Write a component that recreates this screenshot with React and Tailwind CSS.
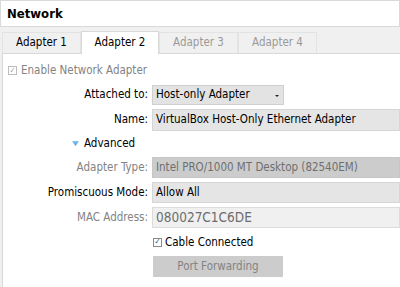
import React from "react";

function Tab({ label, selected, disabled }) {
  if (selected) {
    return (
      <div className="relative z-10 -mb-px flex h-[23px] w-[78px] items-center justify-center border border-b-0 border-[#d9d9d9] bg-white text-black">
        {label}
      </div>
    );
  }
  return (
    <div
      className={
        "flex h-[21px] w-[79px] items-center justify-center border border-b-0 border-[#e3e3e3] bg-[#f0f0f0] " +
        (disabled ? "text-[#9a9a9a]" : "text-black")
      }
    >
      {label}
    </div>
  );
}

function Row({ label, gray, children, className = "" }) {
  return (
    <div className={"flex h-[21px] items-center " + className}>
      <div
        className={
          "w-[146px] pr-[1px] pt-[1px] text-right " + (gray ? "text-[#838383]" : "text-black")
        }
      >
        {label}
      </div>
      <div className="ml-[3px] flex h-full flex-1 items-center">{children}</div>
    </div>
  );
}

export default function App() {
  return (
    <div
      className="h-[287px] w-[400px] overflow-hidden bg-[#f0f0f0] text-[11.5px] leading-none"
      style={{ fontFamily: '"DejaVu Sans Condensed", "Liberation Sans", Arial, sans-serif' }}
    >
      <div className="flex h-[27px] items-center border border-[#d9d9d9] bg-white pl-[6px] text-[13px] font-bold text-black">
        Network
      </div>
      <div className="flex h-[26px] items-end pl-[2px]">
        <Tab label="Adapter 1" />
        <Tab label="Adapter 2" selected />
        <Tab label="Adapter 3" disabled />
        <Tab label="Adapter 4" disabled />
      </div>
      <div className="ml-[2px] h-[240px] border-l border-t border-[#d9d9d9] bg-white pt-[6px]">
        <div className="flex h-[20px] items-center pl-[5px] pt-[1px] text-[#838383]">
          <div className="flex h-[9px] w-[9px] items-center justify-center border border-[#bcbcbc] text-[8px] text-[#9a9a9a]">
            ✓
          </div>
          <span className="ml-[4px]">Enable Network Adapter</span>
        </div>
        <div className="mt-[4px] flex flex-col gap-[4px]">
          <Row label="Attached to:">
            <div className="relative flex h-[20px] w-[132px] items-center border border-[#d0d0d0] bg-[#e3e3e3] pl-[3px] pt-[1px] text-black">
              Host-only Adapter
              <svg className="absolute right-[4px] top-[9px]" width="4" height="2" viewBox="0 0 4 2">
                <path d="M0 0H4L2 2Z" fill="#222" />
              </svg>
            </div>
          </Row>
          <Row label="Name:">
            <div className="flex h-[22px] flex-1 items-center border border-[#d6d6d6] bg-[#e5e5e5] pl-[3px] pt-[1px] text-black">
              VirtualBox Host-Only Ethernet Adapter
            </div>
          </Row>
          <div className="flex h-[19px] items-center pl-[69px] text-black">
            <svg width="7" height="6" viewBox="0 0 7 6">
              <defs>
                <linearGradient id="tg" x1="0" y1="0" x2="0" y2="1">
                  <stop offset="0" stopColor="#8cc8f2" />
                  <stop offset="1" stopColor="#3a95dc" />
                </linearGradient>
              </defs>
              <path d="M0 0H7L3.5 5Z" fill="url(#tg)" />
            </svg>
            <span className="ml-[5px] pt-[1px]">Advanced</span>
          </div>
          <Row label="Adapter Type:" gray>
            <div className="flex h-[21px] flex-1 items-center border border-[#c6c6c6] bg-[#cccccc] pl-[3px] pt-[1px] text-[#6f6f6f]">
              Intel PRO/1000 MT Desktop (82540EM)
            </div>
          </Row>
          <Row label="Promiscuous Mode:">
            <div className="flex h-[21px] flex-1 items-center border border-[#d6d6d6] bg-[#e5e5e5] pl-[3px] pt-[1px] text-black">
              Allow All
            </div>
          </Row>
          <Row label="MAC Address:" gray>
            <div className="flex h-[21px] flex-1 items-center border border-[#dcdcdc] bg-[#f0f0f0] pl-[3px] pt-[1px] text-[13.5px] text-[#6d6d6d]">
              080027C1C6DE
            </div>
          </Row>
        </div>
        <div className="mt-[6px] flex h-[16px] items-center pl-[150px] text-black">
          <div className="flex h-[9px] w-[9px] items-center justify-center border border-[#8a8a8a] text-[8px] text-[#444]">
            ✓
          </div>
          <span className="ml-[3px] pt-[1px]">Cable Connected</span>
        </div>
        <div className="ml-[150px] mt-[6px] flex h-[21px] w-[130px] items-center justify-center bg-[#cccccc] pt-[1px] text-[#838383]">
          Port Forwarding
        </div>
      </div>
    </div>
  );
}
